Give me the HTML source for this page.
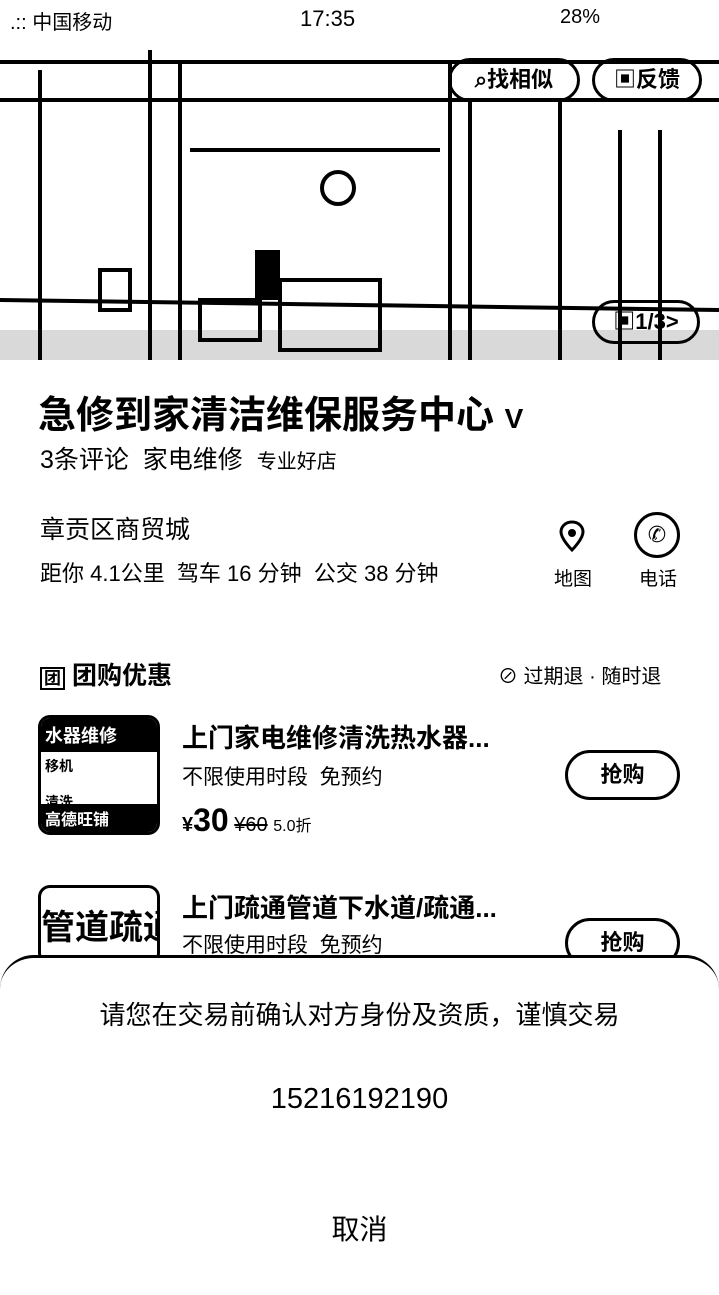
<!DOCTYPE html>
<html><head><meta charset="utf-8"><style>
*{margin:0;padding:0;box-sizing:border-box}
body{width:719px;height:1280px;overflow:hidden;background:#fff;font-family:"Liberation Sans","Noto Sans CJK SC",sans-serif;color:#000;position:relative}
.a{position:absolute;white-space:nowrap}
.photo{position:absolute;left:0;top:0;width:719px;height:370px;background:#fff;overflow:hidden}
.btn{position:absolute;border:3px solid #000;border-radius:30px;font-size:22px;font-weight:bold;text-align:center}
</style></head><body>
<div class="photo">
<svg width="719" height="370" style="position:absolute;left:0;top:0">
<g stroke="#000" fill="none" stroke-width="4">
<line x1="0" y1="62" x2="719" y2="62"/>
<line x1="0" y1="100" x2="719" y2="100"/>
<line x1="40" y1="70" x2="40" y2="360"/>
<line x1="150" y1="50" x2="150" y2="360"/>
<line x1="180" y1="60" x2="180" y2="360"/>
<line x1="450" y1="60" x2="450" y2="360"/>
<line x1="470" y1="100" x2="470" y2="360"/>
<line x1="560" y1="100" x2="560" y2="360"/>
<line x1="620" y1="130" x2="620" y2="360"/>
<line x1="660" y1="130" x2="660" y2="360"/>
<line x1="0" y1="300" x2="719" y2="310"/>
<line x1="190" y1="150" x2="440" y2="150"/>
<circle cx="338" cy="188" r="16"/>
<rect x="280" y="280" width="100" height="70"/>
<rect x="100" y="270" width="30" height="40"/>
<rect x="200" y="300" width="60" height="40"/>
</g>
<g fill="#000"><rect x="255" y="250" width="25" height="50"/><rect x="0" y="330" width="719" height="30" opacity=".15"/></g>
</svg>
<div class="a" style="left:10px;top:6px;font-size:20px">.:: 中国移动</div>
<div class="a" style="left:300px;top:6px;font-size:22px">17:35</div>
<div class="a" style="left:560px;top:6px;font-size:20px">28%</div>
<div class="btn" style="left:448px;top:58px;width:132px;height:44px;line-height:38px">⌕找相似</div>
<div class="btn" style="left:592px;top:58px;width:110px;height:44px;line-height:38px">▣反馈</div>
<div class="btn" style="left:592px;top:300px;width:108px;height:44px;line-height:38px">▣1/3&gt;</div>
</div>
<div style="position:absolute;left:0;top:360px;width:719px;height:40px;background:#fff;border-radius:22px 22px 0 0"></div>
<div class="a" style="left:38px;top:384px;font-size:38px;font-weight:bold">急修到家清洁维保服务中心 <span style="font-size:28px">V</span></div>
<div class="a" style="left:40px;top:440px;font-size:25px">3条评论&nbsp;&nbsp;家电维修&nbsp;&nbsp;<span style="font-size:20px">专业好店</span></div>
<div class="a" style="left:40px;top:510px;font-size:25px">章贡区商贸城</div>
<div class="a" style="left:40px;top:556px;font-size:22px">距你 4.1公里&nbsp;&nbsp;驾车 16 分钟&nbsp;&nbsp;公交 38 分钟</div>
<svg class="a" style="left:548px;top:510px" width="50" height="50"><path d="M24 12c-7 0-11 5-11 10 0 7 11 18 11 18s11-11 11-18c0-5-4-10-11-10z" fill="none" stroke="#000" stroke-width="3"/><circle cx="24" cy="23" r="4" fill="#000"/></svg>
<div class="a" style="left:554px;top:564px;font-size:19px">地图</div>
<div class="a" style="left:634px;top:512px;width:46px;height:46px;border:3px solid #000;border-radius:50%;text-align:center;line-height:40px;font-size:22px">✆</div>
<div class="a" style="left:639px;top:564px;font-size:19px">电话</div>
<div class="a" style="left:40px;top:656px;font-size:25px;font-weight:bold"><span style="border:2px solid #000;font-size:17px;padding:0 2px">团</span> 团购优惠</div>
<div class="a" style="left:498px;top:660px;font-size:20px">⊘ 过期退 · 随时退</div>
<div class="a" style="left:38px;top:715px;width:122px;height:120px;border:3px solid #000;border-radius:12px;background:#fff;overflow:hidden;font-size:18px;font-weight:bold"><div style="background:#000;color:#fff;padding:4px">水器维修</div><div style="padding:4px;font-size:14px">移机<br><br>清洗</div><div style="position:absolute;bottom:0;left:0;right:0;background:#000;color:#fff;font-size:16px;padding:2px 4px">高德旺铺</div></div>
<div class="a" style="left:182px;top:718px;font-size:26px;font-weight:bold">上门家电维修清洗热水器...</div>
<div class="a" style="left:182px;top:761px;font-size:21px">不限使用时段&nbsp;&nbsp;免预约</div>
<div class="a" style="left:182px;top:802px;font-size:20px;font-weight:bold">¥<span style="font-size:32px">30</span> <span style="font-weight:normal;text-decoration:line-through">¥60</span> <span style="font-weight:normal;font-size:16px">5.0折</span></div>
<div class="btn" style="left:565px;top:750px;width:115px;height:50px;line-height:44px">抢购</div>
<div class="a" style="left:38px;top:885px;width:122px;height:80px;border:3px solid #000;border-radius:12px;font-size:34px;font-weight:bold;overflow:hidden;padding-top:12px">管道疏通</div>
<div class="a" style="left:182px;top:888px;font-size:26px;font-weight:bold">上门疏通管道下水道/疏通...</div>
<div class="a" style="left:182px;top:929px;font-size:21px">不限使用时段&nbsp;&nbsp;免预约</div>
<div class="btn" style="left:565px;top:918px;width:115px;height:50px;line-height:44px">抢购</div>
<div style="position:absolute;left:0;top:955px;width:719px;height:340px;background:#fff;border-top:3px solid #000;border-radius:34px 34px 0 0"></div>
<div class="a" style="left:0;width:719px;text-align:center;top:995px;font-size:26px">请您在交易前确认对方身份及资质，谨慎交易</div>
<div class="a" style="left:0;width:719px;text-align:center;top:1083px;font-size:29px">15216192190</div>
<div class="a" style="left:0;width:719px;text-align:center;top:1208px;font-size:28px">取消</div>
</body></html>
